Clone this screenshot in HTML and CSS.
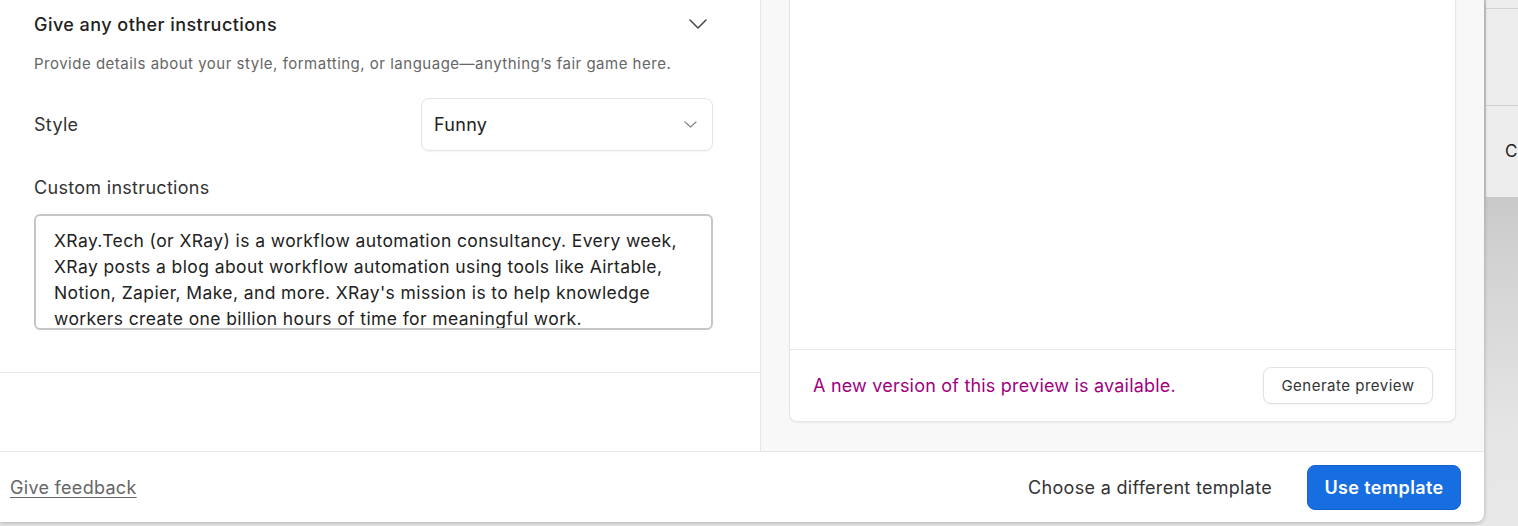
FILE: index.html
```html
<!DOCTYPE html>
<html>
<head>
  <title>Use template</title>
  <link rel="stylesheet" href="styles.css">
</head>
<body>
  <div class="page-behind">
    <div class="behind-row behind-top"></div>
    <div class="behind-row behind-mid"></div>
    <div class="behind-row behind-cell">C</div>
  </div>

  <div class="modal">
    <div class="modal-body">
      <div class="settings">
        <div class="section">
          <div class="section-head">
            <h3>Give any other instructions</h3>
            <svg class="chevron" width="18" height="10" viewBox="0 0 18 10">
              <path d="M1 1 L9 9 L17 1" fill="none" stroke="#444" stroke-width="1.5" stroke-linecap="round" stroke-linejoin="round"/>
            </svg>
          </div>
          <p class="section-desc">Provide details about your style, formatting, or language—anything’s fair game here.</p>

          <div class="field-row">
            <label>Style</label>
            <div class="select">
              <span>Funny</span>
              <svg width="13" height="7" viewBox="0 0 13 7">
                <path d="M1 1 L6.5 6 L12 1" fill="none" stroke="#888" stroke-width="1.2" stroke-linecap="round" stroke-linejoin="round"/>
              </svg>
            </div>
          </div>

          <label class="field-label">Custom instructions</label>
          <textarea class="instructions" spellcheck="false">XRay.Tech (or XRay) is a workflow automation consultancy. Every week, XRay posts a blog about workflow automation using tools like Airtable, Notion, Zapier, Make, and more. XRay's mission is to help knowledge workers create one billion hours of time for meaningful work.</textarea>
        </div>
      </div>

      <div class="preview">
        <div class="preview-card">
          <div class="preview-content"></div>
          <div class="preview-footer">
            <span class="preview-note">A new version of this preview is available.</span>
            <button class="btn-secondary">Generate preview</button>
          </div>
        </div>
      </div>
    </div>

    <div class="modal-footer">
      <a href="#" class="feedback">Give feedback</a>
      <div class="footer-actions">
        <a href="#" class="choose-link">Choose a different template</a>
        <button class="btn-primary">Use template</button>
      </div>
    </div>
  </div>
</body>
</html>
```

FILE: styles.css
```css
body {
  margin: 0;
  width: 1518px;
  height: 526px;
  overflow: hidden;
  position: relative;
  font-family: Inter, "Noto Sans", sans-serif;
  color: #333;
  background: linear-gradient(to bottom, #c9c9c9 197px, #d2d2d2 260px, #e6e6e6 440px, #e8e8e8);
}

/* page under the dim backdrop, peeking out on the right */
.page-behind {
  position: absolute;
  left: 1486px;
  top: 0;
  width: 60px;
  height: 197px;
  background: #ededed;
}
.behind-row {
  border-bottom: 1px solid #d2d2d2;
}
.behind-top {
  height: 8px;
}
.behind-mid {
  height: 96px;
}
.behind-cell {
  height: 92px;
  border-bottom: none;
  padding-left: 19px;
  line-height: 90px;
  font-size: 17px;
  color: #222;
}

.modal {
  position: relative;
  width: 1484px;
  height: 522px;
  background: #fff;
  border-bottom-right-radius: 8px;
  box-shadow: 0 1px 4px rgba(0, 0, 0, 0.25);
  display: flex;
  flex-direction: column;
  overflow: hidden;
}
.modal-body {
  flex: 1;
  display: flex;
  min-height: 0;
}

.settings {
  width: 761px;
  border-right: 1px solid #e6e6e6;
  box-sizing: border-box;
}
.section {
  padding: 13px 47px 42px 34px;
  border-bottom: 1px solid #e6e6e6;
}
.section-head {
  display: flex;
  justify-content: space-between;
  align-items: center;
}
.section-head h3 {
  margin: 0;
  font-size: 18px;
  letter-spacing: 0.45px;
  line-height: 24px;
  font-weight: 500;
  color: #222;
}
.chevron {
  margin: -2px 6px 0 0;
}
.section-desc {
  margin: 17px 0 0;
  font-size: 15px;
  letter-spacing: 0.5px;
  line-height: 20px;
  color: #666;
}

.field-row {
  margin-top: 24px;
  display: flex;
  justify-content: space-between;
  align-items: center;
}
.field-row label,
.field-label {
  font-size: 18px;
  letter-spacing: 0.3px;
  line-height: 24px;
  color: #333;
}
.select {
  width: 292px;
  height: 53px;
  box-sizing: border-box;
  border: 1px solid #e4e4e4;
  border-radius: 8px;
  box-shadow: 0 1px 2px rgba(0, 0, 0, 0.05);
  padding: 0 15px 0 12px;
  display: flex;
  justify-content: space-between;
  align-items: center;
  font-size: 18px;
  letter-spacing: 0.3px;
  color: #222;
}
.field-label {
  display: block;
  margin-top: 25px;
}
.instructions {
  display: block;
  margin-top: 14px;
  width: 679px;
  height: 116px;
  box-sizing: border-box;
  border: 2px solid #c6c6c6;
  border-radius: 6px;
  padding: 12px 6px 0 18px;
  font-family: Inter, "Noto Sans", sans-serif;
  font-size: 17.5px;
  letter-spacing: 0.4px;
  line-height: 26px;
  color: #222;
  resize: none;
  overflow: hidden;
  outline: none;
}

.preview {
  flex: 1;
  background: #f8f8f8;
  padding: 0 28px 29px;
  display: flex;
}
.preview-card {
  flex: 1;
  background: #fff;
  border: 1px solid #e6e6e6;
  border-top: none;
  border-radius: 0 0 8px 8px;
  box-shadow: 0 1px 2px rgba(0, 0, 0, 0.06);
  display: flex;
  flex-direction: column;
}
.preview-content {
  flex: 1;
  border-bottom: 1px solid #e8e8e8;
}
.preview-footer {
  height: 71px;
  display: flex;
  justify-content: space-between;
  align-items: center;
  padding: 0 22px 0 23px;
}
.preview-note {
  font-size: 18px;
  letter-spacing: 0.2px;
  color: #a1007e;
}
.btn-secondary {
  height: 37px;
  width: 170px;
  background: #fff;
  border: 1px solid #e2e2e2;
  border-radius: 8px;
  box-shadow: 0 1px 2px rgba(0, 0, 0, 0.05);
  font-family: Inter, "Noto Sans", sans-serif;
  font-size: 15px;
  letter-spacing: 0.5px;
  color: #333;
}

.modal-footer {
  height: 70px;
  border-top: 1px solid #e6e6e6;
  display: flex;
  justify-content: space-between;
  align-items: center;
  padding: 0 23px 0 10px;
}
.feedback {
  font-size: 18px;
  letter-spacing: 0.3px;
  color: #666;
  text-decoration: underline;
  text-underline-offset: 3px;
}
.footer-actions {
  display: flex;
  align-items: center;
  gap: 35px;
}
.choose-link {
  font-size: 18px;
  letter-spacing: 0.3px;
  color: #333;
  text-decoration: none;
}
.btn-primary {
  width: 154px;
  height: 45px;
  background: #166ee1;
  border: 1px solid #1462cc;
  border-radius: 8px;
  color: #fff;
  font-family: Inter, "Noto Sans", sans-serif;
  font-size: 18px;
  letter-spacing: 0.4px;
  font-weight: 600;
}
```
